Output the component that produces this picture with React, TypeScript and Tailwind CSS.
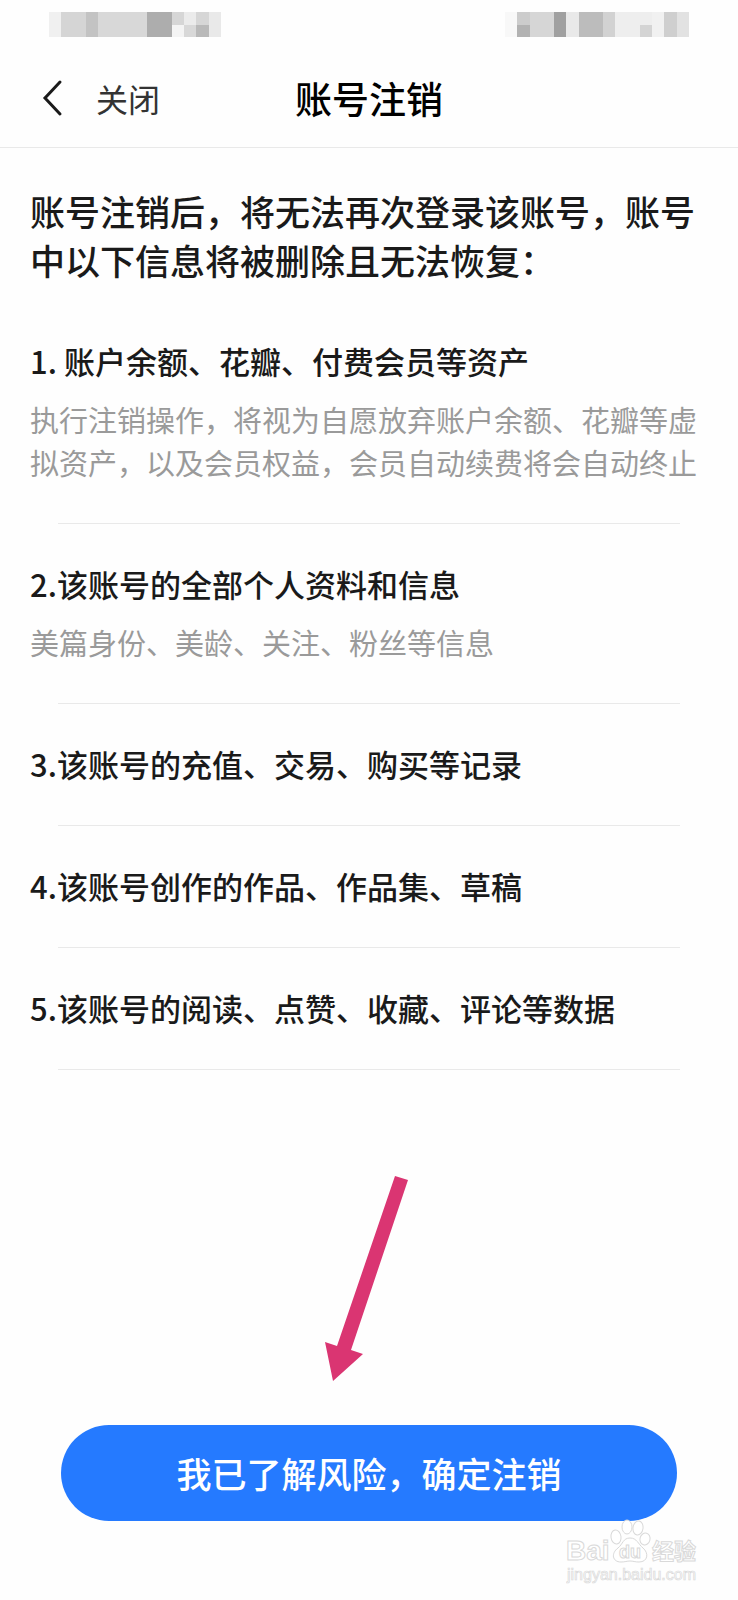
import classNames from "clsx";

interface Item {
  title: string;
  desc?: string;
}

interface Cell {
  x: number;
  y?: number;
  w?: number;
  h?: number;
  fill: string;
}

const items: Item[] = [
  {
    title: "1. 账户余额、花瓣、付费会员等资产",
    desc: "执行注销操作，将视为自愿放弃账户余额、花瓣等虚拟资产，以及会员权益，会员自动续费将会自动终止",
  },
  { title: "2.该账号的全部个人资料和信息", desc: "美篇身份、美龄、关注、粉丝等信息" },
  { title: "3.该账号的充值、交易、购买等记录" },
  { title: "4.该账号创作的作品、作品集、草稿" },
  { title: "5.该账号的阅读、点赞、收藏、评论等数据" },
];

const leftCells: Cell[] = [
  { x: 0, fill: "#f0f0f0" },
  { x: 1, w: 2, fill: "#d5d5d5" },
  { x: 3, fill: "#c3c3c3" },
  { x: 4, w: 4, fill: "#d8d8d8" },
  { x: 8, w: 2, fill: "#adadad" },
  { x: 10, h: 1, fill: "#d6d6d6" },
  { x: 10, y: 1, h: 1, fill: "#f4f4f4" },
  { x: 11, h: 1, fill: "#ebebeb" },
  { x: 11, y: 1, h: 1, fill: "#d8d8d8" },
  { x: 12, h: 1, fill: "#d6d6d6" },
  { x: 12, y: 1, h: 1, fill: "#b9b9b9" },
  { x: 13, fill: "#e9e9e9" },
];

const rightCells: Cell[] = [
  { x: 0, fill: "#f8f8f8" },
  { x: 1, h: 1, fill: "#cccccc" },
  { x: 1, y: 1, h: 1, fill: "#b2b2b2" },
  { x: 2, w: 2, fill: "#d6d6d6" },
  { x: 4, fill: "#a0a0a0" },
  { x: 5, fill: "#e9e9e9" },
  { x: 6, w: 2, fill: "#bcbcbc" },
  { x: 8, fill: "#d2d2d2" },
  { x: 9, w: 3, fill: "#eeeeee" },
  { x: 11, y: 1, h: 1, fill: "#d4d4d4" },
  { x: 12, fill: "#f1f1f1" },
  { x: 13, fill: "#cfcfcf" },
  { x: 14, fill: "#e2e2e2" },
];

const Mosaic: React.FC<{ cells: Cell[]; cols: number; className: string }> = ({ cells, cols, className }) => (
  <svg
    viewBox={`0 0 ${cols} 2`}
    preserveAspectRatio="none"
    shapeRendering="crispEdges"
    aria-hidden="true"
    className={classNames("h-[25px]", className)}
  >
    {cells.map(({ x, y = 0, w = 1, h = 2, fill }) => (
      <rect key={`${x}-${y}`} x={x} y={y} width={w} height={h} fill={fill} />
    ))}
  </svg>
);

const Watermark = () => (
  <div className="absolute right-9 bottom-[15px] w-[136px]" aria-hidden="true">
    <svg viewBox="0 0 136 66" className="w-full" fill="#fff" stroke="#d9d9d9" strokeWidth="1">
      <ellipse cx="50" cy="18" rx="5" ry="7" transform="rotate(-8 50 18)" />
      <ellipse cx="61" cy="8" rx="5" ry="7" />
      <ellipse cx="72" cy="9" rx="5" ry="7" transform="rotate(8 72 9)" />
      <ellipse cx="79" cy="20" rx="5" ry="6" transform="rotate(15 79 20)" />
      <path d="M64 19c-7 0-7 6-12 10-7 5-6 14 3 14 4 0 6-1 9-1s5 1 9 1c9 0 10-9 4-14-5-4-6-10-13-10Z" />
      <g fontFamily="Liberation Sans, sans-serif">
        <text x="0" y="41" fontSize="28" fontWeight="700">
          Bai
        </text>
        <text x="53" y="39" fontSize="18" fontWeight="700">
          du
        </text>
        <text x="1" y="61" fontSize="16" strokeWidth="0.7">
          jingyan.baidu.com
        </text>
      </g>
      <text x="86" y="40" fontSize="22" fontWeight="700" fontFamily="Noto Sans CJK SC, sans-serif">
        经验
      </text>
    </svg>
  </div>
);

const App: React.FC = () => {
  return (
    <div className="relative flex flex-col min-h-screen bg-[#fefefe] text-[#1a1a1a] font-['Noto_Sans_CJK_SC',sans-serif]">
      <header className="border-b border-[#e9e9e9]">
        <div className="flex justify-between pt-3 px-[49px]">
          <Mosaic cells={leftCells} cols={14} className="w-[172px]" />
          <Mosaic cells={rightCells} cols={15} className="w-[184px]" />
        </div>
        <div className="grid grid-cols-3 items-center h-[110px] pb-2 pt-5">
          <button type="button" className="flex items-center pl-10 text-[32px] leading-[48px] text-[#333]">
            <svg
              viewBox="0 0 24 40"
              className="w-6 h-10 mr-8"
              fill="none"
              stroke="#1a1a1a"
              strokeWidth="3"
              strokeLinecap="round"
            >
              <path d="M20 4 5 20l15 16" />
            </svg>
            关闭
          </button>
          <h1 className="text-center text-[37px] leading-[48px] font-medium text-black">账号注销</h1>
        </div>
      </header>

      <main className="px-[30px] pt-[38px]">
        <h2 className="mb-[17px] text-[35px] leading-[49px] font-medium">
          账号注销后，将无法再次登录该账号，账号中以下信息将被删除且无法恢复：
        </h2>
        <ul>
          {items.map(({ title, desc }) => (
            <li key={title}>
              <h3 className="pt-[37px] text-[31px] leading-[45px] font-medium">{title}</h3>
              {desc && <p className="mt-[15px] text-[29px] leading-[43px] text-[#9a9a9a]">{desc}</p>}
              <hr className="mt-[39px] mx-7 border-t border-[#e9e9e9]" />
            </li>
          ))}
        </ul>
      </main>

      <footer className="flex flex-col items-center mt-auto px-[61px] pb-[79px]">
        <svg viewBox="0 0 88 206" className="w-[88px] h-[206px] mb-[43px]" fill="#da3572" aria-hidden="true">
          <path d="M70 0 83 4 26 174 38 178 8 205 0 166 12 170Z" />
        </svg>
        <button type="button" className="w-full h-24 rounded-full bg-[#257aff] text-[35px] font-medium text-white">
          我已了解风险，确定注销
        </button>
      </footer>
      <Watermark />
    </div>
  );
};

export default App;
